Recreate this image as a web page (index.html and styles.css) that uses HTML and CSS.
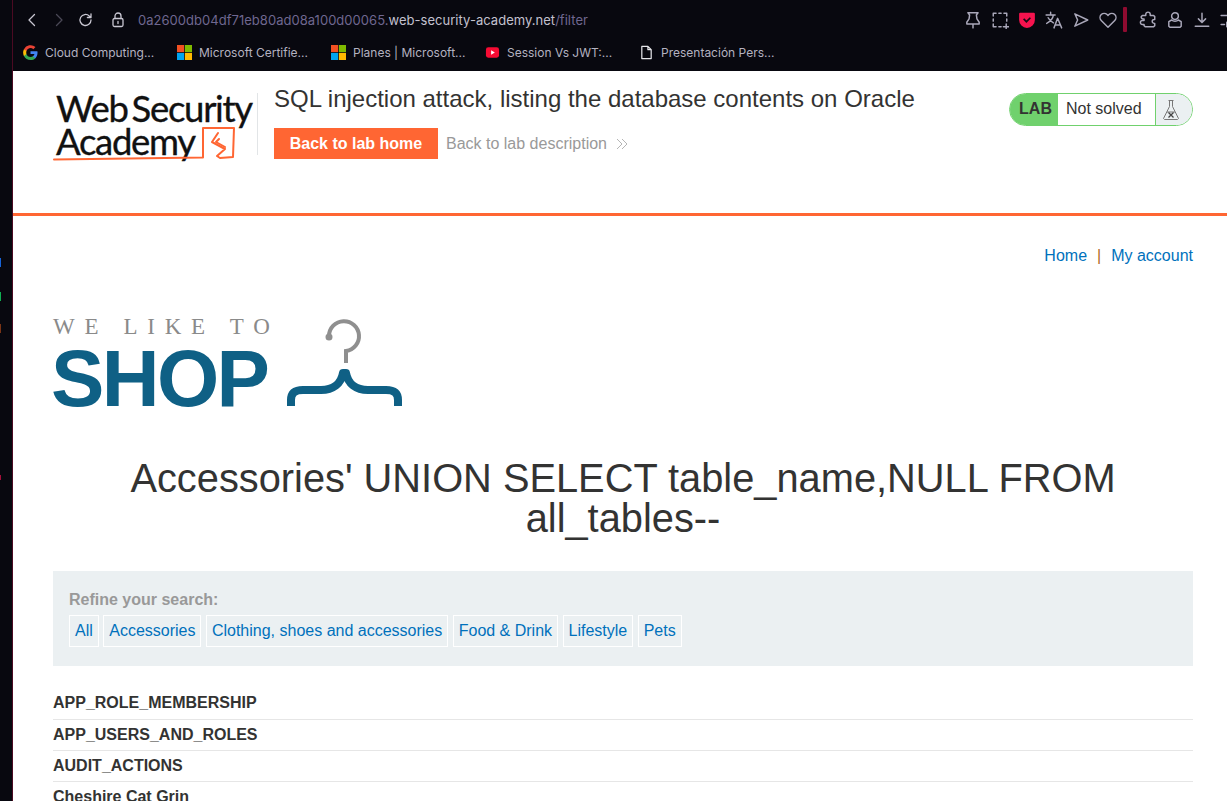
FILE: index.html
```html
<!DOCTYPE html>
<html lang="en">
<head>
<meta charset="utf-8">
<title>SQL injection attack, listing the database contents on Oracle</title>
<link rel="stylesheet" href="styles.css">
</head>
<body>
<div class="browser">
  <div class="rail">
    <span class="dot dot-blue"></span>
    <span class="dot dot-green"></span>
    <span class="dot dot-brown"></span>
    <span class="dot dot-red"></span>
  </div>
  <div class="window">
    <div class="toolbar">
      <div class="nav-icons">
        <svg class="nav-icon" viewBox="0 0 16 16"><path d="M10.500 2.500 5 8l5.500 5.500" class="st-light"/></svg>
        <svg class="nav-icon" viewBox="0 0 16 16"><path d="M5.500 2.500 11 8l-5.500 5.500" class="st-dim"/></svg>
        <svg class="nav-icon" viewBox="0 0 16 16"><path d="M13 8a5.500 5.500 0 1 1-1.700-4L13 5.500M13 1.800v3.700H9.400" class="st-light"/></svg>
      </div>
      <svg class="lock" viewBox="0 0 14 16"><rect x="2" y="6.500" width="10" height="8" rx="1.500" class="st-light"/><path d="M4 6.500V4a3 3 0 0 1 6 0v2.500M7 9.500v2" class="st-light"/></svg>
      <div class="url"><span class="url-dim">0a2600db04df71eb80ad08a100d00065.</span><span class="url-main">web-security-academy.net</span><span class="url-dim">/filter</span></div>
      <div class="tools">
        <svg class="tool" viewBox="0 0 16 16"><path d="M3.500 1.500h9l-1.500 2 .5 3.500 2 3v1.500h-11V10l2-3 .5-3.500zM8 11.500V15" class="st-tool"/></svg>
        <svg class="tool" viewBox="0 0 16 16"><path d="M4.500 2H2v2.500M7 2h2M11.500 2H14v2.500M14 7v2M2 7v2M2 11.500V14h2.500M7 14h2M11 14h5M13.500 11.500v5" class="st-tool"/></svg>
        <svg class="tool" viewBox="0 0 16 16"><path d="M2 1.500h12a1 1 0 0 1 1 1V8a7 7 0 0 1-14 0V2.500a1 1 0 0 1 1-1z" class="fill-pocket"/><path d="m5 7 2.500 2.500L11 6" class="st-pocket"/></svg>
        <svg class="tool" viewBox="0 0 16 16"><path d="M1 3.500h8M5 1v2.500M7.500 3.500C7 7 4.500 9.500 1.500 11M2.800 6c1 2 2.800 3.500 4.700 4.500M8 15l3.200-8.500L14.800 15M9.200 12.500h4.300" class="st-tool"/></svg>
        <svg class="tool" viewBox="0 0 16 16"><path d="M2.500 2.500 14 8 2.500 13.500 5 8z" class="st-tool"/></svg>
        <svg class="tool" viewBox="0 0 16 16"><path d="M8 14.500 2 8.500a3.800 3.800 0 0 1 0-5.300 3.700 3.700 0 0 1 5.200 0l.8.800.8-.8a3.700 3.700 0 0 1 5.200 0 3.800 3.800 0 0 1 0 5.300z" class="st-tool"/></svg>
        <span class="tool-bar"></span>
        <svg class="tool" viewBox="0 0 16 16"><path d="M6 3a2 2 0 0 1 4 0v1h3l1 1v2.500h-.5a1.700 1.700 0 0 0 0 3.500h.5v2l-1 1H5.500l-1-1v-1H3a1.700 1.700 0 0 1 0-3.500h1.500V7H3L2 6V5l1-1h3z" class="st-tool"/></svg>
        <svg class="tool" viewBox="0 0 16 16"><circle cx="8" cy="4.500" r="3" class="st-tool"/><path d="M5 8 2.500 9.500v4l1 1h9l1-1v-4L11 8M5 8c1.500 1.500 4.500 1.500 6 0" class="st-tool"/></svg>
        <svg class="tool" viewBox="0 0 16 16"><path d="M8 2v8M4.800 7 8 10.300 11.200 7M2 13.500h12" class="st-tool"/></svg>
        <svg class="tool" viewBox="0 0 16 16"><path d="M1 4h6M11 4h4M9 2v4M1 12h3M8 12h7M6 10v4" class="st-tool"/></svg>
      </div>
    </div>
    <div class="bookmarks">
      <div class="bookmark">
        <svg class="bm-icon" viewBox="0 0 16 16"><path d="M15.500 8.200c0-.6 0-1.100-.2-1.600H8v3h4.200a3.600 3.600 0 0 1-1.600 2.400v2h2.600c1.500-1.400 2.300-3.400 2.300-5.800z" class="g-blue"/><path d="M8 16c2.200 0 4-.7 5.200-2l-2.600-2c-.7.500-1.500.8-2.600.8-2 0-3.700-1.400-4.300-3.200H1v2A8 8 0 0 0 8 16z" class="g-green"/><path d="M3.700 9.600a4.800 4.800 0 0 1 0-3.100v-2H1a8 8 0 0 0 0 7.100z" class="g-yellow"/><path d="M8 3.200c1.200 0 2.200.4 3 1.200l2.300-2.300A8 8 0 0 0 1 4.500l2.700 2C4.300 4.600 6 3.200 8 3.200z" class="g-red"/></svg>
        <span>Cloud Computing...</span>
      </div>
      <div class="bookmark">
        <svg class="bm-icon" viewBox="0 0 16 16"><rect width="7.600" height="7.600" class="ms-red"/><rect x="8.400" width="7.600" height="7.600" class="ms-green"/><rect y="8.400" width="7.600" height="7.600" class="ms-blue"/><rect x="8.400" y="8.400" width="7.600" height="7.600" class="ms-yellow"/></svg>
        <span>Microsoft Certifie...</span>
      </div>
      <div class="bookmark">
        <svg class="bm-icon" viewBox="0 0 16 16"><rect width="7.600" height="7.600" class="ms-red"/><rect x="8.400" width="7.600" height="7.600" class="ms-green"/><rect y="8.400" width="7.600" height="7.600" class="ms-blue"/><rect x="8.400" y="8.400" width="7.600" height="7.600" class="ms-yellow"/></svg>
        <span>Planes | Microsoft...</span>
      </div>
      <div class="bookmark">
        <svg class="bm-icon" viewBox="0 0 16 16"><rect x="1" y="2.500" width="14" height="11" rx="2.500" class="yt-bg"/><path d="M6.500 5.500 10.500 8l-4 2.500z" class="yt-play"/></svg>
        <span>Session Vs JWT:...</span>
      </div>
      <div class="bookmark">
        <svg class="bm-icon" viewBox="0 0 16 16"><path d="M3 1.500h6.500L13 5v9.500H3zM9.500 1.500V5H13" class="st-doc"/></svg>
        <span>Presentación Pers...</span>
      </div>
    </div>
    <div class="page">
      <header class="lab-header">
        <div class="academy-logo">
          <div class="academy-text">Web Security<br>Academy</div>
          <svg class="academy-mark" viewBox="0 0 204 70"><path d="M1 61.500C50 61 100 60 150 59.500V30L181 30 180 59 167 60 164 58 172 51 159 44 165 35" class="mark-line"/><path d="M166 41 163 44 172 49" class="mark-line"/></svg>
        </div>
        <div class="lab-title">
          <h2>SQL injection attack, listing the database contents on Oracle</h2>
          <div class="lab-actions">
            <a class="btn-home">Back to lab home</a>
            <a class="lab-desc">Back to lab description
              <svg class="chev" viewBox="0 0 14 14"><path d="m2 2 5 5-5 5M7 2l5 5-5 5" class="st-chev"/></svg>
            </a>
          </div>
        </div>
        <div class="badge">
          <span class="badge-lab">LAB</span>
          <span class="badge-status">Not solved</span>
          <span class="badge-flask">
            <svg class="flask" viewBox="0 0 18 22"><path d="M6.500 1.500h5M7.500 1.500v6L1.500 19.500l1 1h13l1-1-6-12v-6M5 13h8" class="st-flask"/><path d="m6.500 13.500 5 5M11.500 13.500l-5 5" class="st-flask-x"/></svg>
          </span>
        </div>
      </header>
      <main class="content">
        <nav class="top-links"><a>Home</a><span class="sep">|</span><a>My account</a></nav>
        <div class="shop-logo">
          <div class="shop-text">
            <div class="shop-small">WE LIKE TO</div>
            <div class="shop-big">SHOP</div>
          </div>
          <svg class="hanger" viewBox="0 0 118 90"><path d="M42 18a15 15 0 1 1 17 15V45" class="hanger-hook"/><circle cx="42" cy="19" r="3.500" class="hanger-dot"/><path d="M4 88v-6c0-7 4-10 12-10h18c12 0 20-6 22-17h3c2 11 10 17 22 17h18c8 0 12 3 12 10v6" class="hanger-brace"/></svg>
        </div>
        <h1>Accessories' UNION SELECT table_name,NULL FROM all_tables--</h1>
        <section class="filter">
          <div class="filter-label">Refine your search:</div>
          <div class="filter-tags">
            <a>All</a><a>Accessories</a><a>Clothing, shoes and accessories</a><a>Food &amp; Drink</a><a>Lifestyle</a><a>Pets</a>
          </div>
        </section>
        <div class="rows">
          <div class="row">APP_ROLE_MEMBERSHIP</div>
          <div class="row">APP_USERS_AND_ROLES</div>
          <div class="row">AUDIT_ACTIONS</div>
          <div class="row">Cheshire Cat Grin</div>
        </div>
      </main>
    </div>
  </div>
</div>
</body>
</html>
```
FILE: styles.css
```css
* { box-sizing: border-box; }
html, body { margin: 0; height: 100%; overflow: hidden; background: #08080f; }
svg { display: block; fill: none; }
a { text-decoration: none; }

.browser { display: flex; width: 1227px; height: 801px; overflow: hidden; }
.rail { width: 13px; flex: none; border-right: 1px solid #4b0a22; position: relative; }
.dot { position: absolute; left: 0; width: 1px; height: 9px; }
.dot-blue { top: 258px; background: #1763d8; }
.dot-green { top: 292px; background: #0fae52; }
.dot-brown { top: 324px; background: #7a3416; }
.dot-red { top: 475px; background: #a3103a; height: 5px; }
.window { flex: 1; min-width: 0; display: flex; flex-direction: column; }

.toolbar { height: 35px; flex: none; display: flex; align-items: center; padding-top: 4px; padding-left: 11px; overflow: hidden; }
.nav-icons { display: flex; gap: 11px; }
.nav-icon { width: 16px; height: 16px; }
.st-light, .st-dim, .st-tool { stroke-width: 1.3; stroke-linecap: round; stroke-linejoin: round; }
.st-light { stroke: #c9c7d2; }
.st-dim { stroke: #4a4856; }
.st-tool { stroke: #aaa8ba; }
.lock { width: 14px; height: 16px; margin-left: 17px; }
.url { margin-left: 13px; font: 13px/16px Inter, "Liberation Sans", sans-serif; letter-spacing: .03px; white-space: nowrap; }
.url-dim { color: #6f6790; }
.url-main { color: #c3c1cf; }
.tools { margin-left: auto; display: flex; align-items: center; gap: 9px; flex: none; width: 263px; }
.tool { width: 18px; height: 18px; flex: none; }
.fill-pocket { fill: #f6134e; }
.st-pocket { stroke: #1a0a14; stroke-width: 1.500; }
.tool-bar { width: 4px; height: 25px; background: #8f0b30; border-radius: 1px; flex: none; margin: 0 3px 0 -3px; }

.bookmarks { height: 36px; flex: none; display: flex; padding-left: 10px; padding-bottom: 1px; }
.bookmark { width: 154px; flex: none; display: flex; align-items: center; gap: 7px; font: 12px/16px Inter, "Liberation Sans", sans-serif; color: #b4b2c0; white-space: nowrap; }
.bm-icon { width: 15px; height: 15px; flex: none; }
.g-blue { fill: #4285f4; }
.g-green { fill: #34a853; }
.g-yellow { fill: #fbbc05; }
.g-red { fill: #ea4335; }
.ms-red { fill: #f25022; }
.ms-green { fill: #7fba00; }
.ms-blue { fill: #00a4ef; }
.ms-yellow { fill: #ffb900; }
.yt-bg { fill: #f60b33; }
.yt-play { fill: #fff; }
.st-doc { stroke: #e6e6ea; stroke-width: 1.300; stroke-linejoin: round; }

.page { flex: 1; min-height: 0; background: #fff; overflow: hidden; font-family: "Liberation Sans", Arial, sans-serif; color: #333332; }
.lab-header { height: 145px; border-bottom: 3px solid #ff6633; padding: 22px 34px 0 40px; display: flex; align-items: flex-start; }
.academy-logo { width: 205px; height: 62px; flex: none; border-right: 1px solid #e2e5e7; position: relative; }
.academy-text { font: 400 36.500px/33px Lato, "Liberation Sans", sans-serif; letter-spacing: -1.300px; word-spacing: -4px; -webkit-text-stroke: .35px #111; color: #111; margin: -1px 0 0 3px; white-space: nowrap; }
.academy-mark { position: absolute; left: 0; top: 5px; width: 204px; height: 70px; }
.mark-line { stroke: #ff6633; stroke-width: 2; stroke-linejoin: round; stroke-linecap: round; }

.lab-title { margin-left: 16px; flex: none; }
.lab-title h2 { margin: -9px 0 0; font-size: 24px; font-weight: 400; line-height: 29px; color: #333332; white-space: nowrap; }
.lab-actions { display: flex; align-items: center; margin-top: 15px; }
.btn-home { display: block; width: 164px; height: 31px; background: #ff6633; color: #fff; font-size: 16px; font-weight: 700; line-height: 31px; text-align: center; }
.lab-desc { display: flex; align-items: center; gap: 8px; margin-left: 8px; font-size: 16px; color: #999; }
.chev { width: 14px; height: 14px; }
.st-chev { stroke: #b5b5b5; stroke-width: 1; }

.badge { margin-left: auto; width: 184px; height: 33px; display: flex; border: 1px solid #70d16d; border-radius: 17px; overflow: hidden; font-size: 16px; line-height: 29px; }
.badge-lab { width: 48px; background: #70d16d; font-weight: 700; text-align: center; padding-left: 3px; line-height: 30px; }
.badge-status { flex: 1; padding-left: 8px; border-right: 1px solid #70d16d; line-height: 29px; }
.badge-flask { width: 36px; background: #ebf0f2; display: flex; align-items: center; padding-left: 6px; }
.flask { width: 18px; height: 22px; }
.st-flask { stroke: #777; stroke-width: 1; }
.st-flask-x { stroke: #444; stroke-width: 1.300; }

.content { padding: 0 34px 0 40px; }
.top-links { display: flex; justify-content: flex-end; align-items: center; margin-top: 30px; font-size: 16px; line-height: 20px; color: #0071bc; }
.top-links a { color: #0071bc; }
.sep { margin: 0 10px; color: #b06a1c; }

.shop-logo { display: flex; align-items: flex-start; margin-top: 52px; height: 90px; }
.shop-text { width: 234px; flex: none; }
.shop-small { font: 400 23px/18px "Liberation Serif", serif; letter-spacing: 9.700px; color: #8a8a8a; white-space: nowrap; }
.shop-big { font: 700 80px/66px "Liberation Sans", Arial, sans-serif; letter-spacing: -2.600px; color: #0f6085; white-space: nowrap; margin-top: 10px; margin-left: -2px; }
.hanger { width: 118px; height: 90px; flex: none; }
.hanger-hook { stroke: #8f8f8f; stroke-width: 4; }
.hanger-dot { fill: #8f8f8f; }
.hanger-brace { stroke: #0f6085; stroke-width: 8; stroke-linejoin: round; }

.content h1 { margin: 50px 0 0; font-size: 39.800px; font-weight: 400; line-height: 40px; text-align: center; color: #333332; }

.filter { margin-top: 33px; height: 95px; background: #ebf0f2; padding: 19px 16px 0; }
.filter-label { font-size: 16px; font-weight: 700; line-height: 20px; color: #999; }
.filter-tags { display: flex; gap: 4.450px; margin-top: 5px; }
.filter-tags a { height: 32px; padding: 0 5px; border: 1px solid #fff; font-size: 16px; line-height: 30px; color: #0071bc; white-space: nowrap; }

.rows { margin-top: 23px; }
.row { height: 31px; border-bottom: 1px solid #e6e6e6; font-size: 16px; font-weight: 700; line-height: 30px; color: #333332; white-space: nowrap; }
.row:first-child { line-height: 28px; }
```
